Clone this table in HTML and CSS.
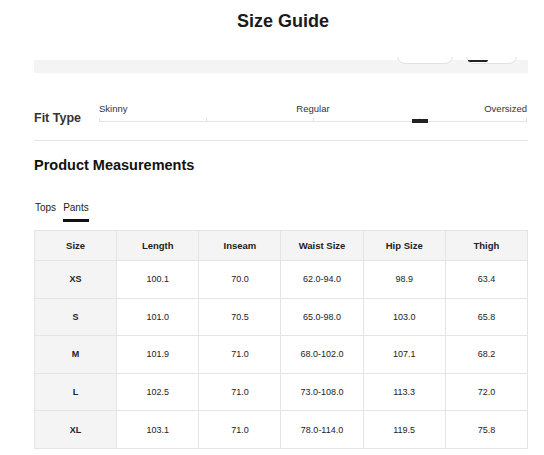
FILE: index.html
```html
<!DOCTYPE html>
<html>
<head>
<meta charset="utf-8">
<title>Size Guide</title>
<link rel="stylesheet" href="styles.css">
</head>
<body>
<div class="modal">
  <h1 class="title">Size Guide</h1>

  <div class="strip">
    <span class="pill pill-a"></span>
    <span class="pill pill-b"><span class="pill-mark"></span></span>
  </div>

  <section class="fit">
    <div class="fit-label">Fit Type</div>
    <div class="slider">
      <div class="slider-labels">
        <span class="lbl-start">Skinny</span>
        <span class="lbl-mid">Regular</span>
        <span class="lbl-end">Oversized</span>
      </div>
      <div class="track">
        <span class="tick"></span>
        <span class="tick"></span>
        <span class="tick"></span>
        <span class="tick"></span>
        <span class="tick"></span>
        <span class="thumb"></span>
      </div>
    </div>
  </section>

  <h2 class="section-title">Product Measurements</h2>

  <div class="tabs">
    <span class="tab">Tops</span>
    <span class="tab tab-active">Pants</span>
  </div>

  <table class="sizes">
    <thead>
      <tr><th>Size</th><th>Length</th><th>Inseam</th><th>Waist Size</th><th>Hip Size</th><th>Thigh</th></tr>
    </thead>
    <tbody>
      <tr><th>XS</th><td>100.1</td><td>70.0</td><td>62.0-94.0</td><td>98.9</td><td>63.4</td></tr>
      <tr><th>S</th><td>101.0</td><td>70.5</td><td>65.0-98.0</td><td>103.0</td><td>65.8</td></tr>
      <tr><th>M</th><td>101.9</td><td>71.0</td><td>68.0-102.0</td><td>107.1</td><td>68.2</td></tr>
      <tr><th>L</th><td>102.5</td><td>71.0</td><td>73.0-108.0</td><td>113.3</td><td>72.0</td></tr>
      <tr><th>XL</th><td>103.1</td><td>71.0</td><td>78.0-114.0</td><td>119.5</td><td>75.8</td></tr>
    </tbody>
  </table>
</div>
</body>
</html>
```

FILE: styles.css
```css
* { box-sizing: border-box; }

html, body {
  margin: 0;
  padding: 0;
  background: #fff;
}

body {
  font-family: "Liberation Sans", Arial, sans-serif;
  color: #222;
}

.modal {
  padding: 0 16px 0 34px;
}

.title {
  margin: 10px 0 0;
  padding-left: 4px;
  font-size: 18px;
  line-height: 22px;
  font-weight: 700;
  text-align: center;
  color: #1a1a1a;
}

.strip {
  margin-top: 25px;
  height: 16px;
  overflow: hidden;
  display: flex;
  justify-content: flex-end;
  align-items: flex-start;
  gap: 13px;
  padding-right: 11px;
  background: linear-gradient(#fff 3px, #f4f4f4 3px);
}

.pill {
  display: flex;
  align-items: flex-end;
  height: 27px;
  margin-top: -20px;
  border: 1px solid #e2e2e2;
  border-radius: 8px;
  background: #fff;
  padding: 0 0 1px 1px;
}

.pill-a { width: 56px; }
.pill-b { width: 51px; }

.pill-mark {
  width: 20px;
  height: 2px;
  background: #222;
  border-radius: 0 0 2px 2px;
}

.fit {
  display: flex;
  align-items: flex-end;
  padding-top: 28px;
  padding-bottom: 17px;
  border-bottom: 1px solid #e6e6e6;
}

.fit-label {
  width: 65px;
  flex: none;
  font-size: 12.5px;
  line-height: 14px;
  font-weight: 700;
  color: #333;
  margin-bottom: -2px;
}

.slider {
  width: 428px;
  flex: none;
}

.slider-labels {
  display: grid;
  grid-template-columns: 1fr auto 1fr;
  font-size: 9.5px;
  line-height: 11px;
  color: #333;
  padding-top: 2px;
}

.lbl-start { justify-self: start; }
.lbl-mid { justify-self: center; }
.lbl-end { justify-self: end; }

.track {
  position: relative;
  margin-top: 4px;
  height: 5px;
  display: flex;
  justify-content: space-between;
  align-items: flex-start;
  background: linear-gradient(transparent 3px, #e4e4e4 3px, #e4e4e4 4px, transparent 4px);
}

.tick {
  width: 1px;
  height: 4px;
  background: #e0e0e0;
}

.thumb {
  position: absolute;
  left: 313px;
  top: 1px;
  width: 16px;
  height: 4px;
  background: #222;
}

.section-title {
  margin: 16px 0 0;
  font-size: 14.5px;
  line-height: 17px;
  font-weight: 700;
  color: #111;
}

.tabs {
  margin-top: 28px;
  padding-left: 1px;
  display: flex;
  gap: 7px;
  align-items: flex-start;
}

.tab {
  font-size: 10px;
  line-height: 12px;
  color: #222;
  padding-bottom: 4.5px;
}

.tab-active {
  border-bottom: 3px solid #111;
}

.sizes {
  margin-top: 8.5px;
  width: 494px;
  table-layout: fixed;
  border-collapse: separate;
  border-spacing: 0;
  border-top: 1px solid #e4e4e4;
  border-left: 1px solid #e4e4e4;
}

.sizes th,
.sizes td {
  padding: 0;
  text-align: center;
  vertical-align: middle;
  border-right: 1px solid #e4e4e4;
  border-bottom: 1px solid #e4e4e4;
  color: #222;
}

.sizes thead th {
  height: 30px;
  font-size: 9.5px;
  font-weight: 700;
  background: #f4f4f4;
}

.sizes tbody th,
.sizes tbody td {
  height: 37.6px;
  font-size: 9px;
}

.sizes tbody th {
  font-weight: 700;
  background: #f4f4f4;
}
```
